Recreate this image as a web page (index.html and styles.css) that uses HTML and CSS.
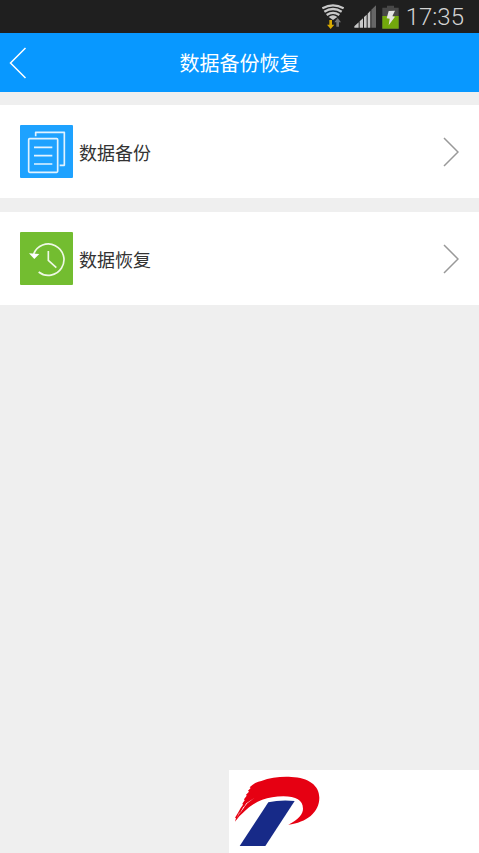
FILE: index.html
```html
<!DOCTYPE html>
<html lang="zh-CN">
<head>
<meta charset="utf-8">
<meta name="viewport" content="width=device-width, initial-scale=1">
<title>数据备份恢复</title>
<link rel="stylesheet" href="styles.css">
</head>
<body>
<div class="status">
  <svg class="wifi" viewBox="36 12 66 78" aria-hidden="true">
    <g fill="none" stroke="#c8c8c8" stroke-width="7">
      <path d="M37 25Q69 7 101 25"/>
      <path d="M43 35Q69 19 95 35"/>
      <path d="M50 45Q69 32 88 45"/>
    </g>
    <path d="M56 51Q69 41 82 51L69 60Z" fill="#c8c8c8"/>
    <path d="M58 60h8v14h7l-11 13-11-13h7z" fill="#d9aa00"/>
    <path d="M79 80v-13h-6l10-13 10 13h-6v13z" fill="#777"/>
  </svg>
  <svg class="signal" viewBox="132 18 69 69" aria-hidden="true">
    <path d="M133 86v-4l13-12v16zM149 86V67l10-9v28zM162 86V54l8-7v39zM173 86V44l8-9v51z" fill="#c8c8c8"/>
    <path d="M184 86V32l14-13v67z" fill="#666"/>
  </svg>
  <svg class="battery" viewBox="216 15 51 72" aria-hidden="true">
    <path d="M217 23h14v-6h21v6h14v63h-49z" fill="#484848"/>
    <path d="M217 48h49v38h-49z" fill="#72a80c"/>
    <path d="M236 33l19-1-8 17 8 1-19 26 3-20-9-1z" fill="#e4e4e4"/>
  </svg>
  <time class="clock">17:35</time>
</div>
<header class="header">
  <button class="back" type="button" aria-label="返回">
    <svg class="back-icon" viewBox="0 0 36 64" aria-hidden="true"><path d="M33 2L3 32L33 62" fill="none" stroke="#fff" stroke-width="3"/></svg>
  </button>
  <h1 class="title">数据备份恢复</h1>
</header>
<main class="list">
  <a class="row" href="#backup">
    <svg class="tile" viewBox="60 75 159 159" aria-hidden="true">
      <rect x="60" y="75" width="159" height="159" rx="3" fill="#1ea2ff"/>
      <g fill="none" stroke="#e2f3ff" stroke-width="5">
        <rect x="86" y="116" width="87" height="101" rx="3"/>
        <path d="M107 109V97h86v99h-14" stroke-linejoin="round"/>
        <path d="M102 142h55M102 167h55M102 192h55"/>
      </g>
    </svg>
    <span class="label">数据备份</span>
    <svg class="arrow" viewBox="0 0 32 60" aria-hidden="true"><path d="M2 2L30 30L2 58" fill="none" stroke="#999" stroke-width="3"/></svg>
  </a>
  <a class="row" href="#restore">
    <svg class="tile" viewBox="60 81 159 159" aria-hidden="true">
      <rect x="60" y="81" width="159" height="159" rx="3" fill="#73bd30"/>
      <g fill="none" stroke="#eef8e5" stroke-width="5">
        <path d="M101 147A47 47 0 1 1 116 201"/>
        <path d="M145 138v28l24 22"/>
      </g>
      <path d="M87 145l31 2-15 15z" fill="#fff"/>
    </svg>
    <span class="label">数据恢复</span>
    <svg class="arrow" viewBox="0 0 32 60" aria-hidden="true"><path d="M2 2L30 30L2 58" fill="none" stroke="#999" stroke-width="3"/></svg>
  </a>
</main>
<aside class="brand">
  <svg class="logo" viewBox="27 30 333 249" role="img" aria-label="标志">
    <path d="M45 185L48 174 45 173 55 157 62 144 69 134 67 131 74 121 72 118 80 107 78 104 87 95 84 92 92 84 89 82C99 71 112 65 124 63C151 53 184 49 214 51C265 53 298 76 298 113C298 157 260 187 205 194C236 178 249 162 249 146C249 120 228 110 190 109C143 109 106 123 77 151L58 169Z" fill="#e60012"/>
    <path d="M104 113L82 130 68 147 79 130ZM75 139L58 163 70 141ZM60 157L50 175 57 159Z" fill="#fff"/>
    <path d="M145 127Q180 119 224 123L136 258H59Z" fill="#172a88"/>
  </svg>
</aside>
</body>
</html>
```
FILE: styles.css
```css
* {
  box-sizing: border-box;
}

body {
  margin: 0;
  min-height: 100vh;
  background: #efefef;
  color: #333;
  font-family: "Noto Sans CJK SC", sans-serif;
}

svg {
  display: block;
  flex: none;
}

.status {
  display: flex;
  align-items: center;
  justify-content: flex-end;
  height: 33px;
  padding-right: 15px;
  background: #1f1f1f;
}

.wifi {
  width: 22px;
  height: 26px;
  margin-right: 10px;
}

.signal {
  width: 23px;
  height: 23px;
  margin-right: 5px;
}

.battery {
  width: 17px;
  height: 24px;
  margin-right: 7px;
}

.clock {
  color: #d4d4d4;
  font-family: Roboto, sans-serif;
  font-size: 24px;
  font-weight: 300;
  line-height: 32px;
}

.header {
  display: grid;
  grid-template-columns: 48px 1fr 48px;
  align-items: center;
  height: 59px;
  background: #0898ff;
}

.back {
  height: 59px;
  padding: 0 0 0 9px;
  border: 0;
  background: none;
  cursor: pointer;
}

.back-icon {
  width: 18px;
  height: 32px;
}

.title {
  margin: 0;
  color: #fff;
  font-size: 20px;
  font-weight: 400;
  line-height: 30px;
  text-align: center;
}

.list {
  display: flex;
  flex-direction: column;
  gap: 14px;
  padding-top: 13px;
}

.row {
  display: flex;
  align-items: center;
  padding: 20px;
  background: #fff;
  color: inherit;
  text-decoration: none;
}

.tile {
  width: 53px;
  height: 53px;
}

.label {
  flex: 1;
  margin-left: 6px;
  font-size: 18px;
  line-height: 28px;
}

.arrow {
  width: 16px;
  height: 30px;
}

.brand {
  position: fixed;
  right: 0;
  bottom: 0;
  width: 250px;
  background: #fff;
}

.logo {
  width: 111px;
  height: 83px;
}
```
